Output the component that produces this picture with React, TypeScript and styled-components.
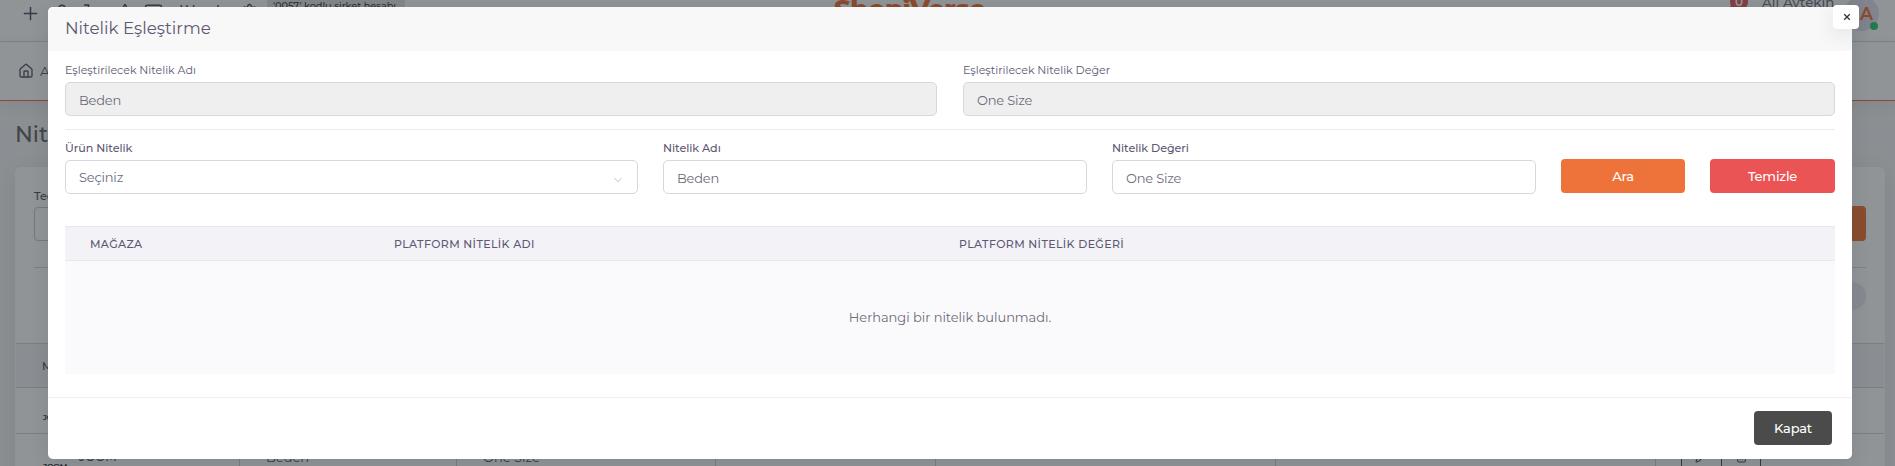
import React from "react";
import styled, { createGlobalStyle } from "styled-components";
import { Plus, Home, User, Bell, Star, Mail, Settings, Pencil, Trash2 } from "lucide-react";

const Global = createGlobalStyle`
  * { box-sizing: border-box; }
  body { margin: 0; overflow: hidden; font-family: Montserrat, Inter, "Open Sans", sans-serif; font-size: 13px; color: #6e6b7b; }
  input, button { font-family: inherit; }
`;

const Page = styled.div`
  position: relative;
  height: 466px;
  overflow: hidden;
  background: #f5f5f6;
`;

/* ---------- page behind the dialog ---------- */
const TopBar = styled.header`
  display: flex;
  align-items: flex-start;
  height: 42px;
  background: #fff;
  border-bottom: 1px solid #d9dade;
`;
const Shortcuts = styled.div`
  display: flex;
  flex: none;
  align-items: flex-start;
  width: 833px;
  padding-left: 20px;
`;
const Shortcut = styled.span<{ $w: number; $top?: number }>`
  display: flex;
  flex: none;
  width: ${(p) => p.$w}px;
  padding-top: ${(p) => p.$top ?? 3}px;
  color: #4b4860;
`;
const Account = styled.div`
  height: 20px;
  width: 138px;
  padding: 0 6px;
  background: #e2e3e4;
  color: #333;
  font-size: 9.75px;
  font-weight: 500;
  letter-spacing: -0.06px;
  line-height: 12px;
  white-space: nowrap;
`;
const Brand = styled.div`
  width: 220px;
  margin-top: -8px;
  padding-left: 1px;
  color: #f26b2c;
  font-size: 26px;
  font-weight: 800;
  letter-spacing: -0.5px;
  line-height: 34px;
`;
const Profile = styled.div`
  display: flex;
  align-items: flex-start;
  margin-left: auto;
  padding-right: 16px;
`;
const BellWrap = styled.span`
  display: flex;
  padding-top: 4px;
`;
const Count = styled.span`
  width: 18px;
  height: 18px;
  margin: -7px 14px 0 -13px;
  border-radius: 9px;
  background: #ea5455;
  color: #fff;
  font-size: 12px;
  font-weight: 600;
  line-height: 18px;
  text-align: center;
`;
const UserName = styled.span`
  width: 82px;
  margin-top: -6px;
  font-size: 13.4px;
  font-weight: 500;
  line-height: 16px;
`;
const Avatar = styled.span`
  position: relative;
  width: 35px;
  height: 35px;
  margin-top: -4px;
  padding-right: 6px;
  border-radius: 50%;
  background: #e3e1ee;
  color: #f26b2c;
  font-size: 17.5px;
  font-weight: 600;
  line-height: 35px;
  text-align: right;
`;
const Online = styled.i`
  position: absolute;
  right: 1px;
  bottom: 1px;
  width: 8px;
  height: 8px;
  border-radius: 50%;
  background: #28c76f;
`;
const Nav = styled.nav`
  display: flex;
  align-items: center;
  gap: 6px;
  height: 59px;
  padding-left: 18px;
  background: #fff;
  border-bottom: 1px solid #f26b2c;
  box-shadow: 0 4px 20px rgba(0, 0, 0, 0.08);
  color: #565360;
  font-size: 13.5px;
`;
const PageTitle = styled.h2`
  margin: 17px 0 0 15px;
  height: 49px;
  color: #636363;
  font-size: 22px;
  font-weight: 500;
  line-height: 33px;
`;
const Card = styled.section`
  height: 330px;
  margin: 0 10px 0 15px;
  border-radius: 6px 6px 0 0;
  background: #fff;
  box-shadow: 0 4px 24px rgba(34, 41, 47, 0.1);
`;
const CardFilters = styled.div`
  height: 176px;
  padding: 22px 19px 0;
`;
const CardLabel = styled.div`
  height: 17px;
  color: #4b4860;
  font-size: 11.14px;
  font-weight: 550;
  line-height: 14px;
`;
const CardControls = styled.div`
  display: flex;
  justify-content: space-between;
  height: 62px;
  border-bottom: 1px solid #d9dade;
`;
const BackField = styled.div`
  width: 300px;
  height: 34px;
  margin-top: 1px;
  border: 1px solid #c8c7ce;
  border-radius: 4px;
`;
const BackButton = styled.div`
  width: 120px;
  height: 35px;
  border-radius: 4px;
  background: #f0702f;
`;
const RoundToggle = styled.div`
  width: 28px;
  height: 28px;
  margin: 14px 0 0 auto;
  border-radius: 50%;
  background: #ebe9f1;
`;
const BackRow = styled.div<{ $head?: boolean }>`
  display: grid;
  grid-template-columns: 224px 217px 259px 220px 340px 380px 1fr;
  height: ${(p) => (p.$head ? 44 : 46)}px;
  margin: 0 1px;
  border-top: 1px solid #d2d0da;
  background: ${(p) => (p.$head ? "#f3f0f5" : "#fff")};
`;
const BackCell = styled.div<{ $lined?: boolean }>`
  display: flex;
  align-items: center;
  padding-left: 26px;
  border-right: ${(p) => (p.$lined ? "1px solid #d2d0da" : "0")};
  color: #4b4860;
`;
const BackHeading = styled.span`
  font-size: 11px;
  font-weight: 500;
  letter-spacing: 0.4px;
`;
const ShopMark = styled.span<{ $small?: boolean }>`
  width: 37px;
  padding: ${(p) => (p.$small ? 14 : 18)}px 0 0 1px;
  color: #222;
  font-size: ${(p) => (p.$small ? 7 : 8)}px;
  font-weight: 600;
  letter-spacing: -0.3px;
  line-height: 8px;
`;
const ShopName = styled.span`
  font-size: 12px;
  font-weight: 500;
`;
const ActionGroup = styled.div`
  display: flex;
  height: 34px;
  margin-left: -1px;
  border: 1px solid #4b4b4b;
  border-radius: 4px;
`;
const Action = styled.span`
  display: flex;
  align-items: center;
  justify-content: center;
  width: 39px;
  & + & { border-left: 1px solid #4b4b4b; }
`;

/* ---------- dialog ---------- */
const Backdrop = styled.div`
  position: absolute;
  inset: 0;
  padding: 7px 43px 7px 48px;
  background: rgba(34, 41, 47, 0.5);
`;
const Dialog = styled.div`
  position: relative;
  height: 452px;
  border-radius: 5px;
  background: #fff;
  box-shadow: 0 5px 20px rgba(34, 41, 47, 0.1);
`;
const DialogHeader = styled.div`
  height: 44px;
  padding: 6px 17px;
  border-radius: 5px 5px 0 0;
  background: #f8f8f8;
  color: #5e5873;
  font-size: 16.75px;
  line-height: 30px;
`;
const CloseButton = styled.button`
  position: absolute;
  top: -2px;
  right: -7px;
  display: flex;
  align-items: center;
  justify-content: center;
  width: 26px;
  height: 24px;
  padding: 0 0 1px 1px;
  border: 0;
  border-radius: 4px;
  background: #fff;
  box-shadow: 0 5px 20px rgba(34, 41, 47, 0.1);
`;
const DialogBody = styled.div`
  height: 346px;
  padding: 11px 17px 0;
`;
const PairRow = styled.div`
  display: grid;
  grid-template-columns: 1fr 1fr;
  gap: 26px;
  height: 68px;
  border-bottom: 1px solid #ebe9f1;
`;
const FilterRow = styled.div`
  display: grid;
  grid-template-columns: 573px 424px 424px 124px 125px;
  gap: 25px;
  align-items: start;
  height: 96px;
  padding-top: 10px;
`;
const Label = styled.label<{ $strong?: boolean }>`
  display: block;
  height: 20px;
  color: #5e5873;
  font-size: 11.14px;
  font-weight: ${(p) => (p.$strong ? 550 : 400)};
  letter-spacing: -0.04px;
  line-height: 17px;
`;
const Input = styled.input`
  display: block;
  width: 100%;
  height: 34px;
  padding: 1px 13px 0;
  border: 1px solid #d8d6de;
  border-radius: 5px;
  outline: 0;
  background: #fff;
  color: #6e6b7b;
  font-size: 13px;
  letter-spacing: -0.2px;
  &:disabled { background: #efefef; -webkit-text-fill-color: #6e6b7b; opacity: 1; }
`;
const Select = styled.div`
  display: flex;
  align-items: center;
  justify-content: space-between;
  height: 34px;
  padding: 0 14px 1px 13px;
  border: 1px solid #d8d6de;
  border-radius: 5px;
  font-size: 13px;
  letter-spacing: -0.2px;
`;
const Chevron = styled.svg`
  margin-top: 6px;
`;
const Button = styled.button<{ $tone: string }>`
  height: 34px;
  padding: 0 20px;
  border: 0;
  border-radius: 4px;
  background: ${(p) => p.$tone};
  color: #fff;
  font-size: 13px;
  font-weight: 550;
  letter-spacing: -0.2px;
`;
const FilterButton = styled(Button)`
  margin-top: 19px;
`;
const Table = styled.table`
  width: 100%;
  border-collapse: separate;
  border-spacing: 0;
  table-layout: fixed;
`;
const HeadCell = styled.th<{ $w?: number }>`
  width: ${(p) => (p.$w ? p.$w + "px" : "auto")};
  height: 35px;
  padding: 0 0 0 26px;
  border-top: 1px solid #e8e6f0;
  border-bottom: 1px solid #e8e6f0;
  background: #f3f2f7;
  color: #5e5873;
  font-size: 11px;
  font-weight: 550;
  letter-spacing: 0.36px;
  text-align: left;
  &:first-child { padding-left: 25px; }
`;
const EmptyCell = styled.td`
  height: 113px;
  padding: 0 0 2px;
  background: #fafafc;
  font-size: 13px;
  letter-spacing: -0.05px;
  text-align: center;
`;
const DialogFooter = styled.div`
  display: flex;
  justify-content: flex-end;
  height: 62px;
  padding: 13px 20px 0;
  border-top: 1px solid #f1f1f1;
`;

function Background() {
  return (
    <>
      <TopBar>
        <Shortcuts>
          <Shortcut $w={33}><Plus size={21} strokeWidth={1.7} /></Shortcut>
          <Shortcut $w={28}><User size={18} /></Shortcut>
          <Shortcut $w={35} $top={4}>
            <svg width="12" height="16" viewBox="0 0 12 16" fill="none" stroke="currentColor" strokeWidth="1.5">
              <path d="M3 1H7.5V12" />
            </svg>
          </Shortcut>
          <Shortcut $w={28}><Star size={18} /></Shortcut>
          <Shortcut $w={36} $top={2}><Mail size={19} /></Shortcut>
          <Shortcut $w={61} $top={5}>
            <svg width="44" height="14" viewBox="0 0 44 14" fill="none" stroke="currentColor" strokeWidth="1.5">
              <path d="M1 0 4 9M7 0v9M14 0l-3 9M38 0v9" />
            </svg>
          </Shortcut>
          <Shortcut $w={26}><Settings size={17} /></Shortcut>
          <Account>'0057' kodlu şirket hesabı</Account>
        </Shortcuts>
        <Brand>ShopiVerse</Brand>
        <Profile>
          <BellWrap><Bell size={18} /></BellWrap>
          <Count>0</Count>
          <UserName>Ali Aytekin</UserName>
          <Avatar>A<Online /></Avatar>
        </Profile>
      </TopBar>
      <Nav><Home size={16} />Anasayfa</Nav>
      <PageTitle>Nitelik</PageTitle>
      <Card>
        <CardFilters>
          <CardLabel>Tedarikçi</CardLabel>
          <CardControls><BackField /><BackButton /></CardControls>
          <RoundToggle />
        </CardFilters>
        <BackRow $head><BackCell><BackHeading>MAĞAZA</BackHeading></BackCell></BackRow>
        <BackRow><BackCell><ShopMark $small>JOOM</ShopMark></BackCell></BackRow>
        <BackRow>
          <BackCell $lined><ShopMark>JOOM</ShopMark><ShopName>JOOM</ShopName></BackCell>
          <BackCell $lined>Beden</BackCell>
          <BackCell $lined>One Size</BackCell>
          <BackCell $lined />
          <BackCell $lined />
          <BackCell $lined />
          <BackCell>
            <ActionGroup>
              <Action><Pencil size={13} /></Action>
              <Action><Trash2 size={13} /></Action>
            </ActionGroup>
          </BackCell>
        </BackRow>
      </Card>
    </>
  );
}

export default function App() {
  return (
    <>
      <Global />
      <Page>
        <Background />
        <Backdrop>
          <Dialog role="dialog">
            <DialogHeader>Nitelik Eşleştirme</DialogHeader>
            <CloseButton aria-label="Kapat">
              <svg width="8" height="8" viewBox="0 0 8 8" stroke="#333" strokeWidth="1.3">
                <path d="M1.2 1.2 6.8 6.8M6.8 1.2 1.2 6.8" />
              </svg>
            </CloseButton>
            <DialogBody>
              <PairRow>
                <div>
                  <Label>Eşleştirilecek Nitelik Adı</Label>
                  <Input disabled defaultValue="Beden" />
                </div>
                <div>
                  <Label>Eşleştirilecek Nitelik Değer</Label>
                  <Input disabled defaultValue="One Size" />
                </div>
              </PairRow>
              <FilterRow>
                <div>
                  <Label $strong>Ürün Nitelik</Label>
                  <Select>
                    Seçiniz
                    <Chevron width="10" height="6" viewBox="0 0 10 6" fill="none" stroke="#c4c2cc" strokeWidth="1">
                      <path d="M1.5 1 5 4.8 8.5 1" />
                    </Chevron>
                  </Select>
                </div>
                <div>
                  <Label $strong>Nitelik Adı</Label>
                  <Input defaultValue="Beden" />
                </div>
                <div>
                  <Label $strong>Nitelik Değeri</Label>
                  <Input defaultValue="One Size" />
                </div>
                <FilterButton $tone="#ee733a">Ara</FilterButton>
                <FilterButton $tone="#ea5455">Temizle</FilterButton>
              </FilterRow>
              <Table>
                <thead>
                  <tr>
                    <HeadCell $w={303}>MAĞAZA</HeadCell>
                    <HeadCell $w={565}>PLATFORM NİTELİK ADI</HeadCell>
                    <HeadCell>PLATFORM NİTELİK DEĞERİ</HeadCell>
                  </tr>
                </thead>
                <tbody>
                  <tr><EmptyCell colSpan={3}>Herhangi bir nitelik bulunmadı.</EmptyCell></tr>
                </tbody>
              </Table>
            </DialogBody>
            <DialogFooter><Button $tone="#4b4b4b">Kapat</Button></DialogFooter>
          </Dialog>
        </Backdrop>
      </Page>
    </>
  );
}
